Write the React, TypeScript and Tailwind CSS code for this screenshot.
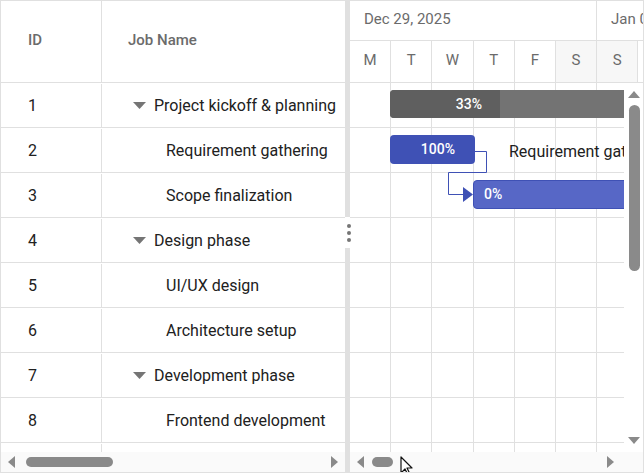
import React from "react";

type Task = {
  id?: number;
  name: string;
  parent?: boolean;
};

const tasks: Task[] = [
  { id: 1, name: "Project kickoff & planning", parent: true },
  { id: 2, name: "Requirement gathering" },
  { id: 3, name: "Scope finalization" },
  { id: 4, name: "Design phase", parent: true },
  { id: 5, name: "UI/UX design" },
  { id: 6, name: "Architecture setup" },
  { id: 7, name: "Development phase", parent: true },
  { id: 8, name: "Frontend development" },
  { name: "" },
];

const days = ["M", "T", "W", "T", "F", "S", "S", "M"];

function Caret({ dir, className }: { dir: "up" | "down" | "left" | "right"; className?: string }) {
  const pts = {
    up: "0,8 6,1 12,8",
    down: "0,1 12,1 6,8",
    left: "8,0 8,12 1,6",
    right: "1,0 1,12 8,6",
  }[dir];
  const size = dir === "up" || dir === "down" ? { w: 12, h: 9 } : { w: 9, h: 12 };
  return (
    <svg width={size.w} height={size.h} viewBox={`0 0 ${size.w} ${size.h}`} className={className}>
      <polygon points={pts} fill="#8a8a8a" />
    </svg>
  );
}

function HScroll({ thumb, end }: { thumb: string; end: string }) {
  return (
    <div className="h-[20px] bg-[#fafafa] flex items-center relative">
      <Caret dir="left" className="ml-[6px]" />
      <div className={thumb} />
      <Caret dir="right" className={end} />
    </div>
  );
}

export default function App() {
  return (
    <div
      className="w-[644px] h-[473px] flex border border-[#e0e0e0] bg-white overflow-hidden"
      style={{ fontFamily: "Roboto, 'Liberation Sans', sans-serif" }}
    >
      {/* task grid */}
      <div className="w-[344px] flex flex-col">
        <div className="h-[82px] flex border-b border-[#e0e0e0] text-[15px] font-medium text-[#6b6b6b] shrink-0">
          <div className="w-[101px] border-r border-[#e0e0e0] flex items-center pl-[27px] pb-[2px]">ID</div>
          <div className="flex-1 flex items-center pl-[26px] pb-[2px]">Job Name</div>
        </div>
        <div className="flex-1 overflow-hidden">
          {tasks.map((t, i) => (
            <div key={i} className="h-[45px] flex border-b border-[#e0e0e0] text-[16px] text-[#212121] pt-[1px]">
              <div className="w-[101px] border-r border-[#e0e0e0] flex items-center pl-[27px]">{t.id}</div>
              <div className="flex-1 flex items-center whitespace-nowrap">
                {t.parent ? (
                  <>
                    <svg width="13" height="7" viewBox="0 0 13 7" className="ml-[31px] mr-[8px]">
                      <polygon points="0,0 13,0 6.5,7" fill="#757575" />
                    </svg>
                    <span>{t.name}</span>
                  </>
                ) : (
                  <span className="ml-[64px]">{t.name}</span>
                )}
              </div>
            </div>
          ))}
        </div>
        <HScroll thumb="ml-[10px] w-[87px] h-[10px] rounded-full bg-[#8a8a8a]" end="ml-auto mr-[6px]" />
      </div>

      {/* splitter */}
      <div className="w-[5px] bg-[#e0e0e0] flex flex-col shrink-0">
        <div className="h-[216px]" />
        <div className="h-[31px] bg-white flex flex-col items-center justify-center gap-[3px]">
          <span className="w-[4px] h-[4px] rounded-full bg-[#757575] ml-[3px]" />
          <span className="w-[4px] h-[4px] rounded-full bg-[#757575] ml-[3px]" />
          <span className="w-[4px] h-[4px] rounded-full bg-[#757575] ml-[3px]" />
        </div>
      </div>

      {/* timeline */}
      <div className="flex-1 flex flex-col min-w-0 relative">
        <div className="h-[82px] shrink-0 border-b border-[#e0e0e0] text-[15px] text-[#6b6b6b] overflow-hidden">
          <div className="h-[40px] flex border-b border-[#e0e0e0] whitespace-nowrap">
            <div className="w-[247px] shrink-0 border-r border-[#e0e0e0] flex items-center pl-[14px] pb-[2px]">
              Dec 29, 2025
            </div>
            <div className="shrink-0 flex items-center pl-[14px] pb-[2px]">Jan 05, 2026</div>
          </div>
          <div className="h-[41px] flex">
            {days.map((d, i) => (
              <div
                key={i}
                className={`w-[41.2px] shrink-0 border-r border-[#e0e0e0] flex items-center justify-center pb-[2px] ${
                  i === 5 || i === 6 ? "bg-[#f7f7f7]" : ""
                }`}
              >
                {d}
              </div>
            ))}
          </div>
        </div>

        <div className="flex-1 flex min-h-0">
          <div className="flex-1 relative overflow-hidden">
            {tasks.map((_, r) => (
              <div key={r} className="h-[45px] flex border-b border-[#e0e0e0]">
                {days.map((_, i) => (
                  <div key={i} className="w-[41.2px] shrink-0 border-r border-[#e0e0e0]" />
                ))}
              </div>
            ))}

            {/* summary bar */}
            <div className="absolute left-[40px] top-[7px] w-[260px] h-[28px] rounded-l-[4px] bg-[#737373] overflow-hidden flex">
              <div className="w-[110px] h-full bg-[#5f5f5f] flex items-center justify-end pr-[18px] text-[14px] font-medium text-white">
                33%
              </div>
            </div>

            {/* child bars */}
            <div className="absolute left-[40px] top-[52px] w-[85px] h-[29px] rounded-[4px] bg-[#3f51b5] flex items-center justify-end pr-[20px] text-[14px] font-medium text-white">
              100%
            </div>
            <div className="absolute left-[159px] top-[57px] text-[16px] text-[#212121] whitespace-nowrap">
              Requirement gathering
            </div>
            <div className="absolute left-[123px] top-[97px] w-[200px] h-[29px] rounded-[4px] bg-[#5767c6] border border-[#3f51b5] flex items-center pl-[10px] text-[14px] font-medium text-white">
              0%
            </div>

            {/* dependency connector */}
            <svg className="absolute left-0 top-0" width="140" height="130">
              <polyline
                points="125,68.5 136.5,68.5 136.5,89.5 98.5,89.5 98.5,111.5 114,111.5"
                fill="none"
                stroke="#3f51b5"
                strokeWidth="1"
              />
              <polygon points="113,104 123,111.5 113,119" fill="#3f51b5" />
            </svg>
          </div>

          {/* vertical scrollbar */}
          <div className="w-[19px] shrink-0 flex flex-col items-center pt-[7px] pb-[7px]">
            <Caret dir="up" className="ml-[1px]" />
            <div className="mt-[6px] w-[11px] h-[166px] rounded-full bg-[#8a8a8a] ml-[1px]" />
            <div className="flex-1" />
            <Caret dir="down" className="ml-[1px]" />
          </div>
        </div>

        <HScroll thumb="ml-[7px] w-[21px] h-[10px] rounded-full bg-[#8a8a8a]" end="ml-auto mr-[28px]" />

        {/* mouse pointer */}
        <svg className="absolute left-[50px] top-[455px]" width="16" height="20" viewBox="0 0 16 20">
          <path d="M1 1 L1 17 L5 13 L8 19 L10 18 L7 12 L12 12 Z" fill="#fff" stroke="#111" strokeWidth="1.2" strokeLinejoin="round" />
        </svg>
      </div>
    </div>
  );
}
